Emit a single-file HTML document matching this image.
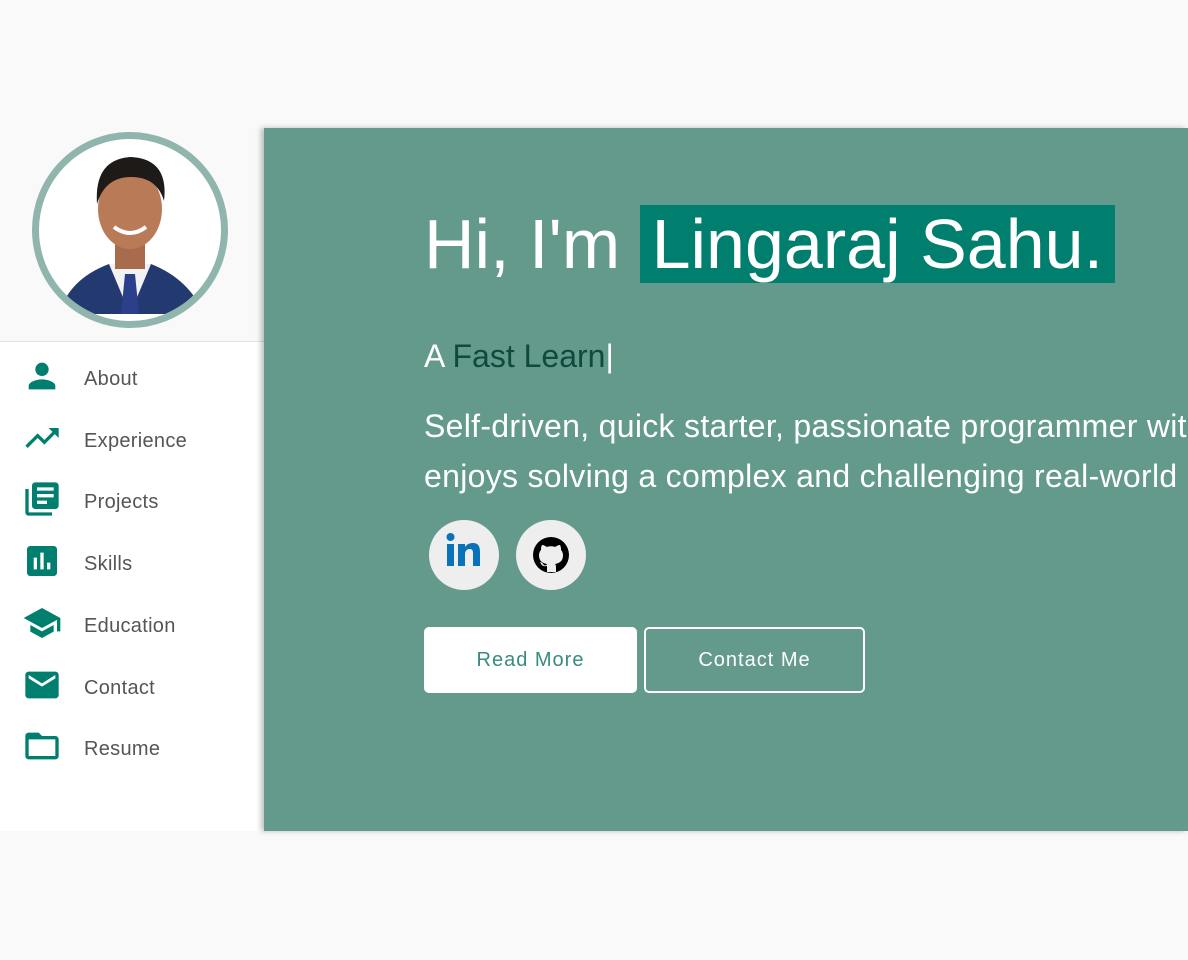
<!DOCTYPE html>
<html><head><meta charset="utf-8"><style>
*{margin:0;padding:0;box-sizing:border-box}
body{width:1188px;height:960px;background:#f9f9f9;font-family:"Liberation Sans",sans-serif;position:relative;overflow:hidden}
.side{position:absolute;left:0;top:128px;width:264px;height:703px;background:#fff}
.top{height:214px;background:#f9f9f9;border-bottom:1px solid #e2e2e2;position:relative}
.avatar{position:absolute;left:32px;top:4px;width:196px;height:196px;border-radius:50%;border:7px solid #8fb5ad;background:#fff;overflow:hidden}
.nav{position:absolute;left:0;top:0;width:264px}
.item{position:absolute;left:0;height:40px;width:264px}
.item svg{position:absolute;left:22px;top:4px;width:40px;height:40px}
.item span{position:absolute;left:84px;top:16px;font-size:20px;color:#555;letter-spacing:.3px}
.main{position:absolute;left:264px;top:128px;width:924px;height:703px;background:#639a8c;box-shadow:-3px 0 5px rgba(0,0,0,.25);overflow:hidden}
h1{position:absolute;left:160px;top:72px;font-size:70px;font-weight:normal;color:#fff;white-space:nowrap;line-height:88px}
h1 b{font-weight:normal;background:#007f6e;padding:0 12px;margin-left:0}
.sub{position:absolute;left:160px;top:210px;font-size:32px;color:#fff}
.sub em{font-style:normal;color:#0f4a3e}
.p{position:absolute;left:160px;top:273px;font-size:32px;line-height:50px;color:#fff;white-space:nowrap;letter-spacing:.3px}
.soc{position:absolute;top:392px;width:70px;height:70px;border-radius:50%;background:#eee}
.btn{position:absolute;top:499px;height:66px;border-radius:5px;font-size:20px;letter-spacing:1px;text-align:center;line-height:66px}
</style></head><body>
<div class="side">
 <div class="top"><div class="avatar">
 <svg width="182" height="182" viewBox="0 0 182 182">
  <path d="M20 175 Q30 140 70 125 L112 125 Q150 140 165 175Z" fill="#223a70"/>
  <path d="M70 125 L91 175 L112 125Z" fill="#f2f2f4"/>
  <path d="M86 135 L96 135 L100 175 L82 175Z" fill="#2b3f8a"/>
  <rect x="76" y="98" width="30" height="32" fill="#a86c4c"/>
  <ellipse cx="91" cy="70" rx="32" ry="40" fill="#b97a58"/>
  <path d="M58 65 Q55 20 92 18 Q130 20 125 62 Q118 38 92 38 Q66 38 58 65Z" fill="#1e1a18"/>
  <path d="M75 88 Q91 100 107 88" stroke="#fff" stroke-width="4" fill="none"/>
 </svg></div></div>
 <div class="nav">
  <div class="item" style="top:224px"><svg viewBox="0 0 24 24"><path fill="#007f6e" d="M12 12c2.2 0 4-1.8 4-4s-1.8-4-4-4-4 1.8-4 4 1.8 4 4 4zm0 2c-2.7 0-8 1.3-8 4v2h16v-2c0-2.7-5.3-4-8-4z"/></svg><span>About</span></div>
  <div class="item" style="top:286px"><svg viewBox="0 0 24 24"><path fill="#007f6e" d="M16 6l2.3 2.3-4.9 4.9-4-4L2 16.6 3.4 18l6-6 4 4 6.3-6.3L22 12V6z"/></svg><span>Experience</span></div>
  <div class="item" style="top:347px"><svg viewBox="0 0 24 24"><path fill="#007f6e" d="M4 6H2v14c0 1.1.9 2 2 2h14v-2H4V6zm16-4H8c-1.1 0-2 .9-2 2v12c0 1.1.9 2 2 2h12c1.1 0 2-.9 2-2V4c0-1.1-.9-2-2-2zm-1 9H9V9h10v2zm-4 4H9v-2h6v2zm4-8H9V5h10v2z"/></svg><span>Projects</span></div>
  <div class="item" style="top:409px"><svg viewBox="0 0 24 24"><path fill="#007f6e" d="M19 3H5c-1.1 0-2 .9-2 2v14c0 1.1.9 2 2 2h14c1.1 0 2-.9 2-2V5c0-1.1-.9-2-2-2zM9 17H7v-7h2v7zm4 0h-2V7h2v10zm4 0h-2v-4h2v4z"/></svg><span>Skills</span></div>
  <div class="item" style="top:471px"><svg viewBox="0 0 24 24"><path fill="#007f6e" d="M5 13.2v4L12 21l7-3.8v-4L12 17l-7-3.8zM12 3L1 9l11 6 9-4.9V17h2V9L12 3z"/></svg><span>Education</span></div>
  <div class="item" style="top:533px"><svg viewBox="0 0 24 24"><path fill="#007f6e" d="M20 4H4c-1.1 0-2 .9-2 2v12c0 1.1.9 2 2 2h16c1.1 0 2-.9 2-2V6c0-1.1-.9-2-2-2zm0 4l-8 5-8-5V6l8 5 8-5v2z"/></svg><span>Contact</span></div>
  <div class="item" style="top:594px"><svg viewBox="0 0 24 24"><path fill="#007f6e" d="M20 6h-8l-2-2H4c-1.1 0-2 .9-2 2v12c0 1.1.9 2 2 2h16c1.1 0 2-.9 2-2V8c0-1.1-.9-2-2-2zm0 12H4V8h16v10z"/></svg><span>Resume</span></div>
 </div>
</div>
<div class="main">
 <h1>Hi, I'm <b>Lingaraj Sahu.</b></h1>
 <div class="sub">A <em>Fast Learn</em>|</div>
 <div class="p">Self-driven, quick starter, passionate programmer with a curious mind who<br>enjoys solving a complex and challenging real-world problems.</div>
 <div class="soc" style="left:165px"><svg width="70" height="70" viewBox="0 0 70 70"><rect x="18" y="24" width="7" height="22" fill="#0a72b8"/><circle cx="21.5" cy="17" r="4" fill="#0a72b8"/><path d="M29 24h7v3c2-3 5-4 8-4 5 0 7 3 7 9v14h-7V33c0-3-1-4-3.5-4S36 31 36 34v12h-7z" fill="#0a72b8"/></svg></div>
 <div class="soc" style="left:252px"><svg width="70" height="70" viewBox="0 0 70 70"><circle cx="35" cy="35" r="18" fill="#000"/><path d="M31 52v-6c-5 1-6-2-7-4 2 0 3 2 4 3 1 1 3 0 3-1-5-1-8-3-8-9 0-2 1-4 2-5 0-2 0-3 1-5 2 0 3 1 5 2 2-1 6-1 8 0 2-1 3-2 5-2 1 2 1 3 1 5 1 1 2 3 2 5 0 6-3 8-8 9 1 1 1 2 1 4v4z" fill="#eee"/></svg></div>
 <div class="btn" style="left:160px;width:213px;background:#fff;color:#3a8a80">Read More</div>
 <div class="btn" style="left:380px;width:221px;border:2px solid #fff;color:#fff;line-height:62px">Contact Me</div>
</div>
</body></html>
